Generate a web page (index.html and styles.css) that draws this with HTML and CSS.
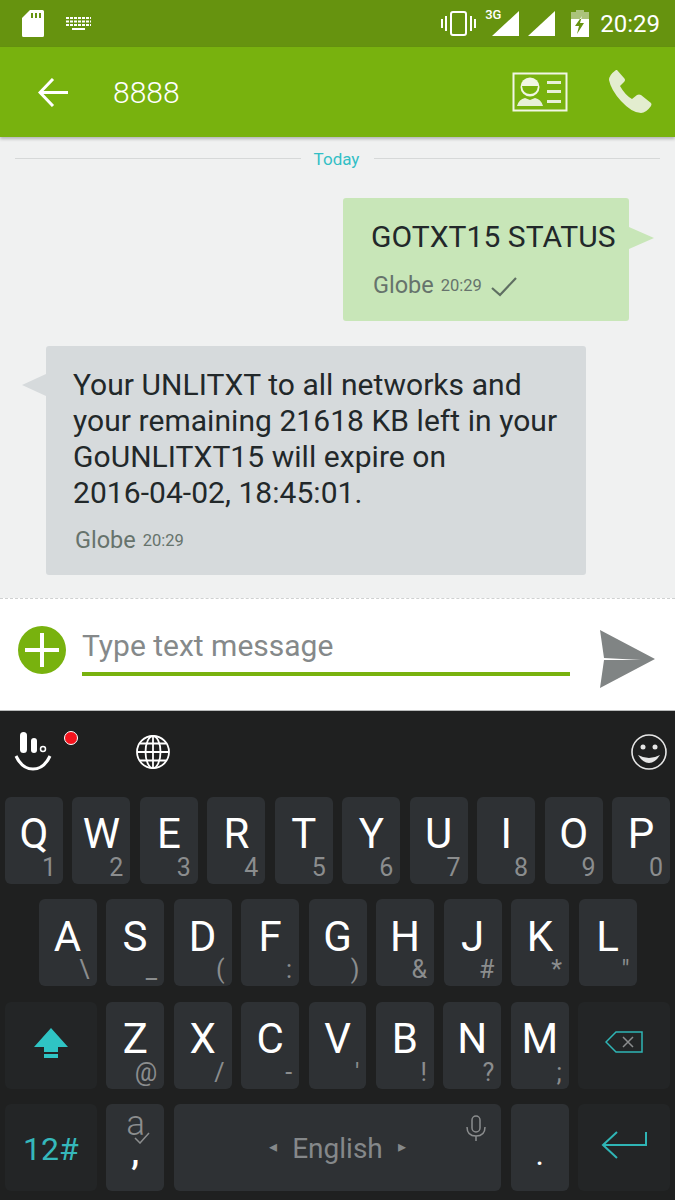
FILE: index.html
```html
<!DOCTYPE html>
<html lang="en">
<head>
    <meta charset="UTF-8">
    <meta name="viewport" content="width=device-width, initial-scale=1.0">
    <title>8888</title>
    <link rel="stylesheet" href="styles.css">
</head>
<body>
    <div class="phone">
        <!-- status bar -->
        <div class="status-bar">
            <div class="status-left">
                <svg class="icon-sd" viewBox="0 0 22 27"><path fill="#fff" fill-rule="evenodd" d="M8 0H20.500Q22 0 22 1.500V25.500Q22 27 20.500 27H1.500Q0 27 0 25.500V8ZM9 3V8H11V3ZM13 3V8H15V3ZM17 3V8H19V3Z"/></svg>
                <svg class="icon-kbd" viewBox="0 0 25 13"><path fill="#fff" d="M0 0h25v2H0zM0 3.500h25v2H0zM0 7h25v2H0zM6 11h13v2H6z"/><path fill="#66930f" d="M3 0h1v9H3zM7 0h1v9H7zM11 0h1v9h-1zM15 0h1v9h-1zM19 0h1v9h-1zM23 0h1v9h-1z"/></svg>
            </div>
            <div class="status-right">
                <svg class="icon-vibrate" viewBox="0 0 35 25"><rect x="10" y="1" width="15" height="23" rx="2" fill="none" stroke="#fff" stroke-width="2"/><path fill="#fff" d="M0 8h2v9H0zM4 5h2v15H4zM29 5h2v15h-2zM33 8h2v9h-2z"/></svg>
                <div class="signal">
                    <span class="signal-label">3G</span>
                    <svg class="icon-signal" viewBox="0 0 27 25"><path fill="#fff" d="M27 0V25H0Z"/></svg>
                </div>
                <svg class="icon-signal" viewBox="0 0 27 25"><path fill="#fff" d="M27 0V25H0Z"/></svg>
                <svg class="icon-battery" viewBox="0 0 18 27"><path fill="#fff" opacity=".45" d="M5 0h8v2h5v7H0V2h5z"/><path fill="#fff" fill-rule="evenodd" d="M0 9H18V27H0ZM11 6 4 16H8L6 24 13 13H9Z"/></svg>
                <span class="status-time">20:29</span>
            </div>
        </div>

        <!-- title bar -->
        <div class="app-bar">
            <svg class="icon-back" viewBox="0 0 30 29"><path fill="none" stroke="#fff" stroke-width="3" d="M30 14.500H3M15 1 2 14.500 15 28"/></svg>
            <span class="app-title">8888</span>
            <svg class="icon-card" viewBox="0 0 56 40"><rect x="1.500" y="1.500" width="53" height="37" fill="none" stroke="#f1f6e4" stroke-width="2"/><circle cx="18" cy="15" r="9.500" fill="#f1f6e4"/><path fill="#78b20e" d="M10 14H26Q25 22 18 22T10 14Z"/><path fill="#e8f0d8" d="M5 34Q7 27 13 26L18 28 23 26Q29 27 31 34ZM35 9H49V12H35ZM35 18H49V21H35ZM35 28H49V31H35Z"/></svg>
            <svg class="icon-phone" viewBox="0 0 44 44"><path fill="#e3edcf" d="M9 0 16 8Q18 10 16 12L12 16Q17 25 24 29L29 25Q31 24 33 25L43 33Q44 34 43 36 38 43 33 43 24 43 13 31 3 20 1 10 1 5 8 0Z"/></svg>
        </div>

        <!-- conversation -->
        <div class="chat">
            <div class="date-row">
                <span class="date-line"></span>
                <span class="date-text">Today</span>
                <span class="date-line"></span>
            </div>
            <div class="bubble bubble-sent">
                <div class="bubble-text">GOTXT15 STATUS</div>
                <div class="bubble-meta">
                    <span class="meta-name">Globe</span>
                    <span class="meta-time">20:29</span>
                    <svg class="icon-check" viewBox="0 0 26 20"><path fill="none" stroke="#5f6f62" stroke-width="2.200" d="M1 11 9 18 25 1"/></svg>
                </div>
            </div>
            <div class="bubble bubble-received">
                <div class="bubble-text">Your UNLITXT to all networks and your remaining 21618 KB left in your GoUNLITXT15 will expire on <span class="nowrap">2016-04-02,</span> 18:45:01.</div>
                <div class="bubble-meta">
                    <span class="meta-name">Globe</span>
                    <span class="meta-time">20:29</span>
                </div>
            </div>
        </div>

        <!-- message box -->
        <div class="compose">
            <svg class="icon-add" viewBox="0 0 48 48"><circle cx="24" cy="24" r="24" fill="#78b20e"/><path fill="#fff" d="M22 7h4v15h15v4H26v15h-4V26H7v-4h15z"/></svg>
            <div class="compose-input">Type text message</div>
            <svg class="icon-send" viewBox="0 0 56 58"><path fill="#808484" d="M1 0 56 29 1 58 5 30H42L5 28Z"/></svg>
        </div>

        <!-- keyboard -->
        <div class="keyboard">
            <div class="kb-tools">
                <div class="kb-logo">
                    <svg class="icon-logo" viewBox="0 0 38 40"><rect x="6" y="0" width="7" height="21" rx="3.500" fill="#fff"/><rect x="17" y="6" width="6" height="15" rx="3" fill="#fff"/><circle cx="29" cy="17" r="2.500" fill="none" stroke="#fff" stroke-width="1.500"/><path fill="none" stroke="#fff" stroke-width="3" d="M2 24Q8 37 19 37T36 24"/></svg>
                    <span class="red-dot"></span>
                </div>
                <svg class="icon-globe" viewBox="0 0 34 34"><g fill="none" stroke="#fff" stroke-width="1.800"><circle cx="17" cy="17" r="16"/><ellipse cx="17" cy="17" rx="7.500" ry="16"/><path d="M17 1V33M1 17H33M4 8.500H30M4 25.500H30"/></g></svg>
                <svg class="icon-smile" viewBox="0 0 36 36"><circle cx="18" cy="18" r="17" fill="none" stroke="#e6e6e6" stroke-width="1.600"/><circle cx="12" cy="13" r="2.500" fill="#e6e6e6"/><circle cx="24" cy="13" r="2.500" fill="#e6e6e6"/><path fill="#e6e6e6" d="M7 21Q18 27 29 21 24 29 18 29T7 21Z"/></svg>
            </div>

            <div class="kb-row">
                <div class="key">Q<span class="hint">1</span></div>
                <div class="key">W<span class="hint">2</span></div>
                <div class="key">E<span class="hint">3</span></div>
                <div class="key">R<span class="hint">4</span></div>
                <div class="key">T<span class="hint">5</span></div>
                <div class="key">Y<span class="hint">6</span></div>
                <div class="key">U<span class="hint">7</span></div>
                <div class="key">I<span class="hint">8</span></div>
                <div class="key">O<span class="hint">9</span></div>
                <div class="key">P<span class="hint">0</span></div>
            </div>
            <div class="kb-row kb-row-home">
                <div class="key">A<span class="hint">\</span></div>
                <div class="key">S<span class="hint">_</span></div>
                <div class="key">D<span class="hint">(</span></div>
                <div class="key">F<span class="hint">:</span></div>
                <div class="key">G<span class="hint">)</span></div>
                <div class="key">H<span class="hint">&amp;</span></div>
                <div class="key">J<span class="hint">#</span></div>
                <div class="key">K<span class="hint">*</span></div>
                <div class="key">L<span class="hint">"</span></div>
            </div>
            <div class="kb-row">
                <div class="key key-func">
                    <svg class="icon-shift" viewBox="0 0 34 30"><path fill="#2fc4c4" d="M17 0 34 19H24V24H10V19H0ZM10 26H24V30H10Z"/></svg>
                </div>
                <div class="key">Z<span class="hint">@</span></div>
                <div class="key">X<span class="hint">/</span></div>
                <div class="key">C<span class="hint">-</span></div>
                <div class="key">V<span class="hint">'</span></div>
                <div class="key">B<span class="hint">!</span></div>
                <div class="key">N<span class="hint">?</span></div>
                <div class="key">M<span class="hint">;</span></div>
                <div class="key key-func">
                    <svg class="icon-delete" viewBox="0 0 38 22"><path fill="none" stroke="#2fb5b5" stroke-width="1.500" d="M11 1H37V21H11L1 11Z"/><path fill="none" stroke="#8b8d8e" stroke-width="1.500" d="M18 6 28 16M28 6 18 16"/></svg>
                </div>
            </div>
            <div class="kb-row">
                <div class="key key-func key-mode">12#</div>
                <div class="key key-comma">
                    <span class="comma-top">a</span>
                    <svg class="icon-tick" viewBox="0 0 16 12"><path fill="none" stroke="#8b8d8e" stroke-width="1.500" d="M1 6 6 11 15 1"/></svg>
                    <span class="comma-mark">,</span>
                </div>
                <div class="key key-space">
                    <span class="space-arrow">&#9666;</span>
                    <span class="space-label">English</span>
                    <span class="space-arrow">&#9656;</span>
                    <svg class="icon-mic" viewBox="0 0 20 26"><g fill="none" stroke="#8b8d8e" stroke-width="1.500"><rect x="6" y="1" width="8" height="16" rx="4"/><path d="M1 12Q1 21 10 21T19 12M10 21V26"/></g></svg>
                </div>
                <div class="key key-dot">.</div>
                <div class="key key-func">
                    <svg class="icon-enter" viewBox="0 0 46 28"><path fill="none" stroke="#2fb5b5" stroke-width="2" d="M45 1V14H2M16 1 2 14 16 27"/></svg>
                </div>
            </div>
        </div>
    </div>
</body>
</html>
```

FILE: styles.css
```css
* {
    margin: 0;
    padding: 0;
    box-sizing: border-box;
}

body {
    font-family: Roboto, "Liberation Sans", sans-serif;
    background: #f0f1f1;
}

svg {
    display: block;
    flex-shrink: 0;
}

.phone {
    width: 675px;
    height: 1200px;
    display: flex;
    flex-direction: column;
    overflow: hidden;
}

/* status bar */
.status-bar {
    height: 47px;
    background: #66930f;
    display: flex;
    justify-content: space-between;
    align-items: center;
    padding: 0 15px 0 22px;
    color: white;
}

.status-left {
    display: flex;
    align-items: center;
    gap: 22px;
}

.status-right {
    display: flex;
    align-items: center;
}

.icon-sd {
    width: 22px;
    height: 27px;
}

.icon-kbd {
    width: 25px;
    height: 13px;
}

.icon-vibrate {
    width: 35px;
    height: 25px;
    margin-right: 16px;
}

.signal {
    position: relative;
    margin-right: 9px;
}

.signal-label {
    position: absolute;
    top: -4px;
    left: -7px;
    font-size: 13px;
    font-weight: 500;
}

.icon-signal {
    width: 27px;
    height: 25px;
}

.icon-battery {
    width: 18px;
    height: 27px;
    margin: 0 11px 0 16px;
}

.status-time {
    font-size: 24px;
    line-height: 28px;
}

/* title bar */
.app-bar {
    height: 90px;
    background: #78b20e;
    display: flex;
    align-items: center;
    padding: 0 23px 0 38px;
    box-shadow: 0 2px 3px rgba(0, 0, 0, 0.25);
    position: relative;
    color: white;
}

.icon-back {
    width: 30px;
    height: 29px;
}

.app-title {
    font-size: 30px;
    font-weight: 300;
    margin-left: 45px;
    flex: 1;
}

.icon-card {
    width: 56px;
    height: 40px;
    margin-right: 40px;
}

.icon-phone {
    width: 44px;
    height: 44px;
}

/* conversation */
.chat {
    height: 461px;
    padding: 10px 0 0;
    display: flex;
    flex-direction: column;
}

.date-row {
    display: flex;
    align-items: center;
    gap: 14px;
    padding: 0 15px;
    height: 22px;
    margin-bottom: 29px;
}

.date-line {
    flex: 1;
    border-top: 1px solid #d6d8d8;
}

.date-text {
    color: #33bfc6;
    font-size: 17px;
    margin: 2px 1px 0 -1px;
}

.bubble {
    position: relative;
    border-radius: 3px;
    color: #22282a;
}

.bubble::after {
    content: '';
    position: absolute;
    border-style: solid;
    border-color: transparent;
}

.bubble-sent {
    align-self: flex-end;
    width: 286px;
    height: 123px;
    margin-right: 46px;
    background: #c8e6b8;
    padding: 21px 0 0 28px;
}

.bubble-sent::after {
    left: 100%;
    top: 29px;
    border-width: 11px 0 11px 25px;
    border-left-color: #c8e6b8;
}

.bubble-received {
    align-self: flex-start;
    width: 540px;
    height: 229px;
    margin: 25px 0 0 46px;
    background: #d6dadc;
    padding: 21px 20px 0 27px;
}

.bubble-received::after {
    right: 100%;
    top: 28px;
    border-width: 11px 24px 11px 0;
    border-right-color: #d6dadc;
}

.bubble-text {
    font-size: 30px;
    line-height: 36px;
    letter-spacing: 0.05px;
}

.nowrap {
    white-space: nowrap;
}

.bubble-meta {
    display: flex;
    align-items: center;
    gap: 7px;
    color: #66736c;
    margin-top: 13px;
    margin-left: 2px;
}

.bubble-sent .bubble-meta {
    margin-top: 14px;
}

.meta-name {
    font-size: 23.500px;
    line-height: 32px;
}

.meta-time {
    font-size: 16.500px;
}

.icon-check {
    width: 26px;
    height: 20px;
    margin-left: 2px;
    margin-top: 3px;
}

/* message box */
.compose {
    height: 113px;
    background: white;
    border-top: 1px dashed #cfd1d1;
    border-bottom: 1px solid #b9bbbb;
    display: flex;
    align-items: center;
    padding: 0 20px 0 18px;
}

.icon-add {
    width: 48px;
    height: 48px;
    margin-top: -10px;
}

.compose-input {
    width: 488px;
    height: 52px;
    margin: -10px 29px 0 16px;
    border-bottom: 4px solid #78b20e;
    font-size: 30px;
    line-height: 44px;
    color: #85898a;
}

.icon-send {
    width: 56px;
    height: 58px;
    margin-top: 9px;
}

/* keyboard */
.keyboard {
    flex: 1;
    background: #1f2020;
    display: flex;
    flex-direction: column;
    gap: 15.300px;
}

.kb-tools {
    height: 70px;
    margin-bottom: 0.700px;
    display: flex;
    align-items: center;
    padding: 12px 8px 0 14px;
}

.kb-logo {
    position: relative;
    width: 38px;
    margin-right: 84px;
}

.icon-logo {
    width: 38px;
    height: 40px;
}

.red-dot {
    position: absolute;
    top: -1px;
    left: 50px;
    width: 14px;
    height: 14px;
    border-radius: 50%;
    background: #f5131d;
    border: 1px solid #fff;
}

.icon-globe {
    width: 34px;
    height: 34px;
}

.icon-smile {
    width: 36px;
    height: 36px;
    margin-left: auto;
}

.kb-row {
    display: flex;
    gap: 9.500px;
    padding: 0 5px;
}

.kb-row-home {
    padding-left: 38.500px;
}

.key {
    position: relative;
    width: 58px;
    height: 87px;
    background: #2e3134;
    border-radius: 6px;
    display: flex;
    align-items: center;
    justify-content: center;
    padding-bottom: 12px;
    color: white;
    font-size: 42px;
    line-height: 34px;
}

.hint {
    position: absolute;
    right: 7px;
    bottom: 6px;
    font-size: 25px;
    line-height: 20px;
    color: #8b8d8e;
}

.key-func {
    width: 92px;
    background: #232526;
    padding-bottom: 0;
}

.key-mode {
    font-size: 32px;
    color: #35b8bb;
    padding-top: 3px;
}

.icon-shift {
    width: 34px;
    height: 30px;
    margin-bottom: 4px;
}

.icon-delete {
    width: 38px;
    height: 22px;
    margin-bottom: 6px;
}

.icon-enter {
    width: 46px;
    height: 28px;
    margin-bottom: 4px;
}

.key-comma {
    display: block;
    padding: 0;
}

.comma-top {
    position: absolute;
    top: 6px;
    left: 20px;
    font-size: 35px;
    font-weight: 300;
    line-height: 28px;
    color: #8b8d8e;
}

.icon-tick {
    position: absolute;
    top: 28px;
    left: 28px;
    width: 16px;
    height: 12px;
}

.comma-mark {
    position: absolute;
    top: 42px;
    left: 25px;
    font-size: 36px;
    line-height: 12px;
    font-weight: 500;
}

.key-space {
    width: 328px;
    padding-bottom: 0;
    gap: 15px;
}

.space-label {
    font-size: 28px;
    padding-top: 3px;
    color: #85888a;
}

.space-arrow {
    font-size: 16px;
    color: #85888a;
}

.icon-mic {
    position: absolute;
    top: 11px;
    right: 15px;
    width: 20px;
    height: 26px;
}

.key-dot {
    font-size: 32px;
    padding-bottom: 0;
    padding-top: 14px;
}
```
